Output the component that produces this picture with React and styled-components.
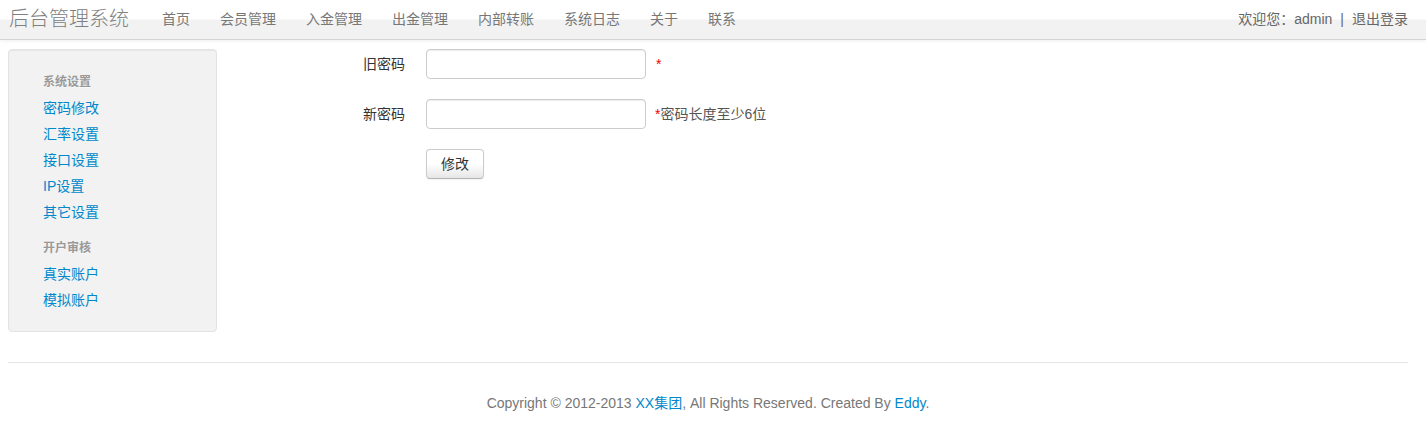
import React from "react";
import styled, { createGlobalStyle } from "styled-components";

const Global = createGlobalStyle`
  html, body { margin: 0; padding: 0; background: #fff; }
  body {
    font-family: "Liberation Sans", "Noto Sans CJK SC", sans-serif;
    font-size: 14px;
    line-height: 20px;
    color: #333;
  }
  * { box-sizing: border-box; }
`;

const Navbar = styled.div`
  height: 40px;
  background: linear-gradient(to bottom, #ffffff 0, #ffffff 19px, #f2f2f2 20px, #f2f2f2 100%);
  border-bottom: 1px solid #d4d4d4;
  box-shadow: 0 1px 4px rgba(0, 0, 0, 0.065);
  display: flex;
  align-items: flex-start;
  padding: 0 18px 0 8px;
`;

const Brand = styled.a`
  font-size: 20px;
  line-height: 20px;
  font-weight: 300;
  color: #808080;
  padding: 9px 18px 9px 1px;
  text-decoration: none;
`;

const NavList = styled.ul`
  display: flex;
  list-style: none;
  margin: 0;
  padding: 0;
`;

const NavItem = styled.li`
  a {
    display: block;
    padding: 9px 15px 11px;
    color: #777;
    text-decoration: none;
    font-size: 14px;
    line-height: 20px;
  }
`;

const UserBox = styled.div`
  margin-left: auto;
  padding-top: 9px;
  font-size: 14px;
  line-height: 20px;
  color: #666;
  a { color: #666; text-decoration: none; }
`;

const Sep = styled.span`
  margin: 0 8px;
`;

const Body = styled.div`
  display: flex;
  align-items: flex-start;
  padding: 9px 18px 0 8px;
`;

const Well = styled.div`
  width: 209px;
  background: #f2f2f2;
  border: 1px solid #e3e3e3;
  border-radius: 4px;
  box-shadow: inset 0 1px 1px rgba(0, 0, 0, 0.05);
  padding: 22px 0 18px 34px;
`;

const SideList = styled.ul`
  list-style: none;
  margin: 0;
  padding: 0;
`;

const SideHeader = styled.li`
  font-size: 12px;
  font-weight: bold;
  line-height: 20px;
  color: #999;
  text-shadow: 0 1px 0 rgba(255, 255, 255, 0.5);
  margin-top: ${(p) => (p.$first ? "0" : "13px")};
  margin-bottom: 3px;
`;

const SideLink = styled.li`
  line-height: 26px;
  font-size: 14px;
  a { color: #0088cc; text-decoration: none; }
`;

const Form = styled.form`
  margin: 0;
  padding-left: 28px;
`;

const Group = styled.div`
  display: flex;
  align-items: center;
  margin-bottom: 20px;
`;

const Label = styled.label`
  width: 160px;
  text-align: right;
  color: #333;
  font-size: 14px;
  line-height: 20px;
  margin-right: 21px;
`;

const Input = styled.input`
  width: 220px;
  height: 30px;
  padding: 4px 6px;
  border: 1px solid #ccc;
  border-radius: 4px;
  box-shadow: inset 0 1px 1px rgba(0, 0, 0, 0.075);
  font-size: 14px;
  background: #fff;
`;

const Help = styled.span`
  margin-left: ${(p) => (p.$wide ? "10px" : "9px")};
  color: #555;
  font-size: 14px;
  b { color: #e00; font-weight: normal; }
`;

const Spacer = styled.div`
  width: 181px;
`;

const Button = styled.button`
  width: 58px;
  height: 30px;
  border: 1px solid #ccc;
  border-bottom-color: #b3b3b3;
  border-radius: 4px;
  background: linear-gradient(to bottom, #ffffff 0, #ffffff 50%, #e6e6e6 100%);
  box-shadow: inset 0 1px 0 rgba(255, 255, 255, 0.2), 0 1px 2px rgba(0, 0, 0, 0.05);
  color: #333;
  font-family: inherit;
  font-size: 14px;
  line-height: 20px;
  padding: 0;
`;

const Footer = styled.footer`
  margin: 30px 18px 0 8px;
  border-top: 1px solid #e5e5e5;
  padding-top: 30px;
  text-align: center;
  color: #777;
  font-size: 14px;
  line-height: 20px;
  a { color: #0088cc; text-decoration: none; }
`;

const navItems = ["首页", "会员管理", "入金管理", "出金管理", "内部转账", "系统日志", "关于", "联系"];

export default function App() {
  return (
    <>
      <Global />
      <Navbar>
        <Brand href="#">后台管理系统</Brand>
        <NavList>
          {navItems.map((t) => (
            <NavItem key={t}>
              <a href="#">{t}</a>
            </NavItem>
          ))}
        </NavList>
        <UserBox>
          欢迎您：admin<Sep>|</Sep><a href="#">退出登录</a>
        </UserBox>
      </Navbar>
      <Body>
        <Well>
          <SideList>
            <SideHeader $first>系统设置</SideHeader>
            <SideLink><a href="#">密码修改</a></SideLink>
            <SideLink><a href="#">汇率设置</a></SideLink>
            <SideLink><a href="#">接口设置</a></SideLink>
            <SideLink><a href="#">IP设置</a></SideLink>
            <SideLink><a href="#">其它设置</a></SideLink>
            <SideHeader>开户审核</SideHeader>
            <SideLink><a href="#">真实账户</a></SideLink>
            <SideLink><a href="#">模拟账户</a></SideLink>
          </SideList>
        </Well>
        <Form onSubmit={(e) => e.preventDefault()}>
          <Group>
            <Label>旧密码</Label>
            <Input type="password" />
            <Help $wide><b>*</b></Help>
          </Group>
          <Group>
            <Label>新密码</Label>
            <Input type="password" />
            <Help><b>*</b>密码长度至少6位</Help>
          </Group>
          <Group>
            <Spacer />
            <Button type="submit">修改</Button>
          </Group>
        </Form>
      </Body>
      <Footer>
        Copyright © 2012-2013 <a href="#">XX集团</a>, All Rights Reserved. Created By <a href="#">Eddy</a>.
      </Footer>
    </>
  );
}
